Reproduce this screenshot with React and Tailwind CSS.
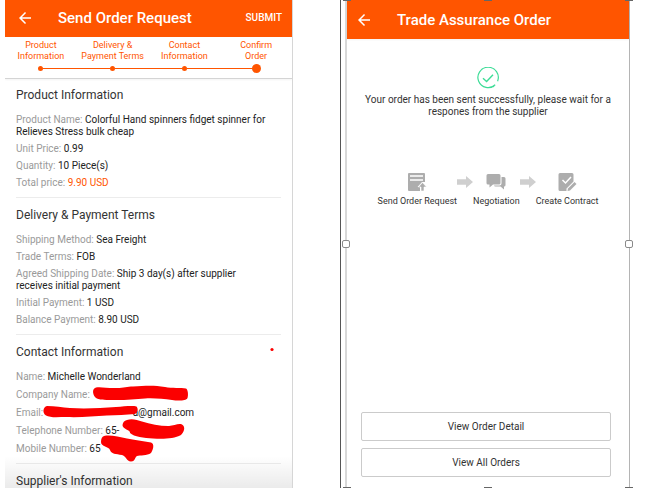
import React from 'react';
import { MdArrowBack } from 'react-icons/md';

const STEPS = [
  ['Product', 'Information'],
  ['Delivery &', 'Payment Terms'],
  ['Contact', 'Information'],
  ['Confirm', 'Order'],
];

function TopBar({ title, className, children }) {
  return (
    <header className={`flex items-center bg-[#ff5500] text-white shrink-0 ${className}`}>
      <button type="button" aria-label="Back" className="shrink-0">
        <MdArrowBack size={18} />
      </button>
      <h1 className="flex-1 ml-6 text-[15px] leading-5 font-medium whitespace-nowrap">{title}</h1>
      {children}
    </header>
  );
}

function Stepper() {
  return (
    <ol className="grid grid-cols-4 h-[42px] pt-[3px] shrink-0 border-b border-[#d4d4d4] shadow-xs text-center text-[9px] leading-[11px] text-[#ff5500]">
      {STEPS.map(([top, bottom], i) => {
        const first = i === 0;
        const last = i === STEPS.length - 1;
        return (
          <li key={i} className="flex flex-col">
            <span>{top}</span>
            <span>{bottom}</span>
            <span className="flex items-center h-[12px]">
              <span className={`flex-1 h-px ${first ? '' : 'bg-[#ff5500]'}`} />
              <span className={`rounded-full bg-[#ff5500] ${last ? 'size-[9px]' : 'size-[5px]'}`} />
              <span className={`flex-1 h-px ${last ? '' : 'bg-[#ff5500]'}`} />
            </span>
          </li>
        );
      })}
    </ol>
  );
}

function Section({ title, gap = 'gap-[5px]', className = 'pt-[9px]', children }) {
  return (
    <section className={`relative mx-[11px] pb-2 border-b border-[#ececec] ${className}`}>
      <h2 className="text-[12px] leading-4 text-[#333]">{title}</h2>
      <dl className={`mt-[11px] pr-2 flex flex-col text-[10px] leading-3 ${gap}`}>{children}</dl>
    </section>
  );
}

function Row({ label, accent, children }) {
  return (
    <div>
      <dt className="inline text-[#9a9a9a]">{label}: </dt>
      <dd className={`inline ${accent ? 'text-[#ff5500]' : 'text-[#222]'}`}>{children}</dd>
    </div>
  );
}

function Scribbles() {
  return (
    <svg viewBox="16 336 264 128" width="264" height="128" className="absolute left-0 top-0" fill="#fb0000" aria-hidden="true">
      <circle cx="272" cy="350.5" r="1.6" />
      <path d="M96 388.500C101 387.500 108 389.500 117 389C124 389 127 387.500 133 387.500C144 387 153 386 165 388C172 389.500 181 388.500 186 389.500C188 390.500 188.500 396 187.500 399C186 402 178 402 172 401C163 400 155 399 145 399.500C135 400 123 401.500 112 401C105 401 97 401 95 398C93 395.500 91.500 390 96 388.500Z" />
      <path d="M47 407C55 407 62 408.500 70 409C86 410 101 409 116 408C124 407.500 132 406.500 136.500 407.500C138.500 410 138 413 135 415C126 416 117 416 107 416.500C94 417.500 80 418.500 66 418C59 418 50 419 46 416.500C42 414 43 408 47 407Z" />
      <path d="M127 421C132 419 137 421 142 422.500C150 425 160 427 168 427C173 427.500 178 424 182 425.500C186 428 184 433 181 436C174 440 163 440 153 439.500C144 439 134 438 130 434C131 431 122 430 122.500 426C123 423.500 124 421.500 127 421Z" />
      <path d="M104 437C110 435.500 119 438 127 439.500C134 441 143 442 151 443.500C155 445 153 451 151 454C147 457 140 456 137 457C134 459 136 462 131 462.500C126 462 127 458 122 456C116 455 111 455 110 451C109 447.500 101 448 101 443C101 439.500 102 437.500 104 437Z" />
    </svg>
  );
}

function OrderRequest() {
  return (
    <div className="relative flex flex-col flex-[287_1_0%] min-w-0 overflow-hidden border-r border-[#d6d6d6]">
      <TopBar title="Send Order Request" className="h-[37px] pl-[11px] pr-2.5 pb-0.5">
        <button type="button" className="text-[10px] leading-3 font-medium">SUBMIT</button>
      </TopBar>
      <Stepper />

      <Section title="Product Information" className="pt-2">
        <Row label="Product Name">Colorful Hand spinners fidget spinner for Relieves Stress bulk cheap</Row>
        <Row label="Unit Price">0.99</Row>
        <Row label="Quantity">10 Piece(s)</Row>
        <Row label="Total price" accent>9.90 USD</Row>
      </Section>

      <Section title="Delivery & Payment Terms">
        <Row label="Shipping Method">Sea Freight</Row>
        <Row label="Trade Terms">FOB</Row>
        <Row label="Agreed Shipping Date">Ship 3 day(s) after supplier receives initial payment</Row>
        <Row label="Initial Payment">1 USD</Row>
        <Row label="Balance Payment">8.90 USD</Row>
      </Section>

      <div className="relative">
        <Section title="Contact Information" gap="gap-1.5">
          <Row label="Name">Michelle Wonderland</Row>
          <Row label="Company Name" />
          <Row label="Email"><span className="inline-block w-[87px]" />a@gmail.com</Row>
          <Row label="Telephone Number">65-</Row>
          <Row label="Mobile Number">65</Row>
        </Section>
        <div className="absolute inset-y-0 left-[11px]">
          <Scribbles />
        </div>
      </div>

      <h2 className="mx-[11px] pt-[9px] text-[12px] leading-4 text-[#333]">Supplier's Information</h2>
      <div className="absolute inset-x-0 bottom-0 h-8 bg-linear-to-b from-black/0 to-black/8 pointer-events-none" />
    </div>
  );
}

function FlowArrow() {
  return (
    <svg width="16" height="12" viewBox="0 0 16 12" fill="#cfcfcf" className="mt-1 shrink-0" aria-hidden="true">
      <path d="M0 3.200H9V0L16 6L9 12V8.800H0Z" />
    </svg>
  );
}

function FlowStep({ label, children }) {
  return (
    <div className="flex flex-col items-center">
      <svg width="20" height="20" viewBox="0 0 20 20" fill="#adadad" aria-hidden="true">{children}</svg>
      <span className="mt-[3px] text-[9px] leading-3 text-[#333] whitespace-nowrap">{label}</span>
    </div>
  );
}

function Handle({ className }) {
  return <span className={`absolute size-2 rounded-xs border border-[#8a8a8a] bg-white ${className}`} />;
}

function Notch({ className }) {
  return <span className={`absolute w-2 h-px bg-[#666] ${className}`} />;
}

function OrderSent() {
  return (
    <div className="flex flex-[285_1_0%] min-w-0 border-l border-[#555] pl-1">
      <div className="relative flex flex-col flex-1 border-l-2 border-r border-l-[#d8d8d8] border-r-[#b4b4b4]">
        <TopBar title="Trade Assurance Order" className="h-[39px] pl-2 shadow-xs" />

        <main className="flex flex-col items-center flex-1">
          <svg width="22" height="22" viewBox="0 0 22 22" fill="none" stroke="#3ddc97" className="mt-7" aria-hidden="true">
            <path d="M18.200 17.800A10.200 10.200 0 1 1 20.600 14.200M17.200 18.900L15.600 20" strokeWidth="1.200" />
            <path d="M6 11.200L9.600 14.500L16 7.800" strokeWidth="1.400" />
          </svg>
          <p className="mt-[5px] max-w-[264px] text-center text-[10px] leading-3 text-[#333]">
            Your order has been sent successfully, please wait for a respones from the supplier
          </p>

          <div className="mt-[54px] flex items-start">
            <FlowStep label="Send Order Request">
              <path d="M2 1H17Q18 1 18 2V10H15L10.500 15H13V19H2Q1 19 1 18V2Q1 1 2 1Z" />
              <path d="M3 4H16M3 8H16" stroke="#fff" strokeWidth="1.500" />
              <path d="M15.500 10.500L19.500 15H17V19H14V15H11.500Z" stroke="#fff" strokeWidth="0.600" />
            </FlowStep>
            <FlowArrow />
            <FlowStep label="Negotiation">
              <path d="M15.500 5H18Q19.500 5 19.500 6.500V13Q19.500 14.500 18 14.500V17.500L14.500 14.500H9.500Q8 14.500 8 13.500H13.500Q15.500 13.500 15.500 11.500Z" />
              <path d="M2 2H13Q14.500 2 14.500 3.500V11Q14.500 12.500 13 12.500H7L3.500 15.500V12.500H2Q.5 12.500 .5 11V3.500Q.5 2 2 2Z" />
            </FlowStep>
            <FlowArrow />
            <FlowStep label="Create Contract">
              <path d="M3 1H15Q16.500 1 16.500 2.500V9.500L9.500 16.500V19H3Q1.500 19 1.500 17.500V2.500Q1.500 1 3 1Z" />
              <path d="M5.500 8L8.500 11L14 5" fill="none" stroke="#fff" strokeWidth="1.500" />
              <path d="M17.500 10L19.500 12L13 18.500L10.500 19L11 16.500Z" />
            </FlowStep>
          </div>
        </main>

        <footer className="flex flex-col gap-[7px] pl-3.5 pr-[18px] pb-[11px] text-[10px] leading-3 text-[#333]">
          <button type="button" className="h-[29px] rounded-xs border border-[#cbcbcb]">View Order Detail</button>
          <button type="button" className="h-[29px] rounded-xs border border-[#cbcbcb]">View All Orders</button>
        </footer>

        <Handle className="top-1/2 -left-[5px] -translate-y-1/2" />
        <Handle className="top-1/2 -right-1 -translate-y-1/2" />
        <Notch className="top-0 -left-1" />
        <Notch className="top-0 left-1/2 -translate-x-1/2" />
        <Notch className="top-0 -right-1" />
        <Notch className="bottom-0 -left-1" />
        <Notch className="bottom-0 left-1/2 -translate-x-1/2" />
        <Notch className="bottom-0 -right-1" />
      </div>
    </div>
  );
}

export default function App() {
  return (
    <div className="flex h-screen gap-[47px] pl-[5px] pr-[18px] bg-white font-[Roboto,sans-serif]">
      <OrderRequest />
      <OrderSent />
    </div>
  );
}
